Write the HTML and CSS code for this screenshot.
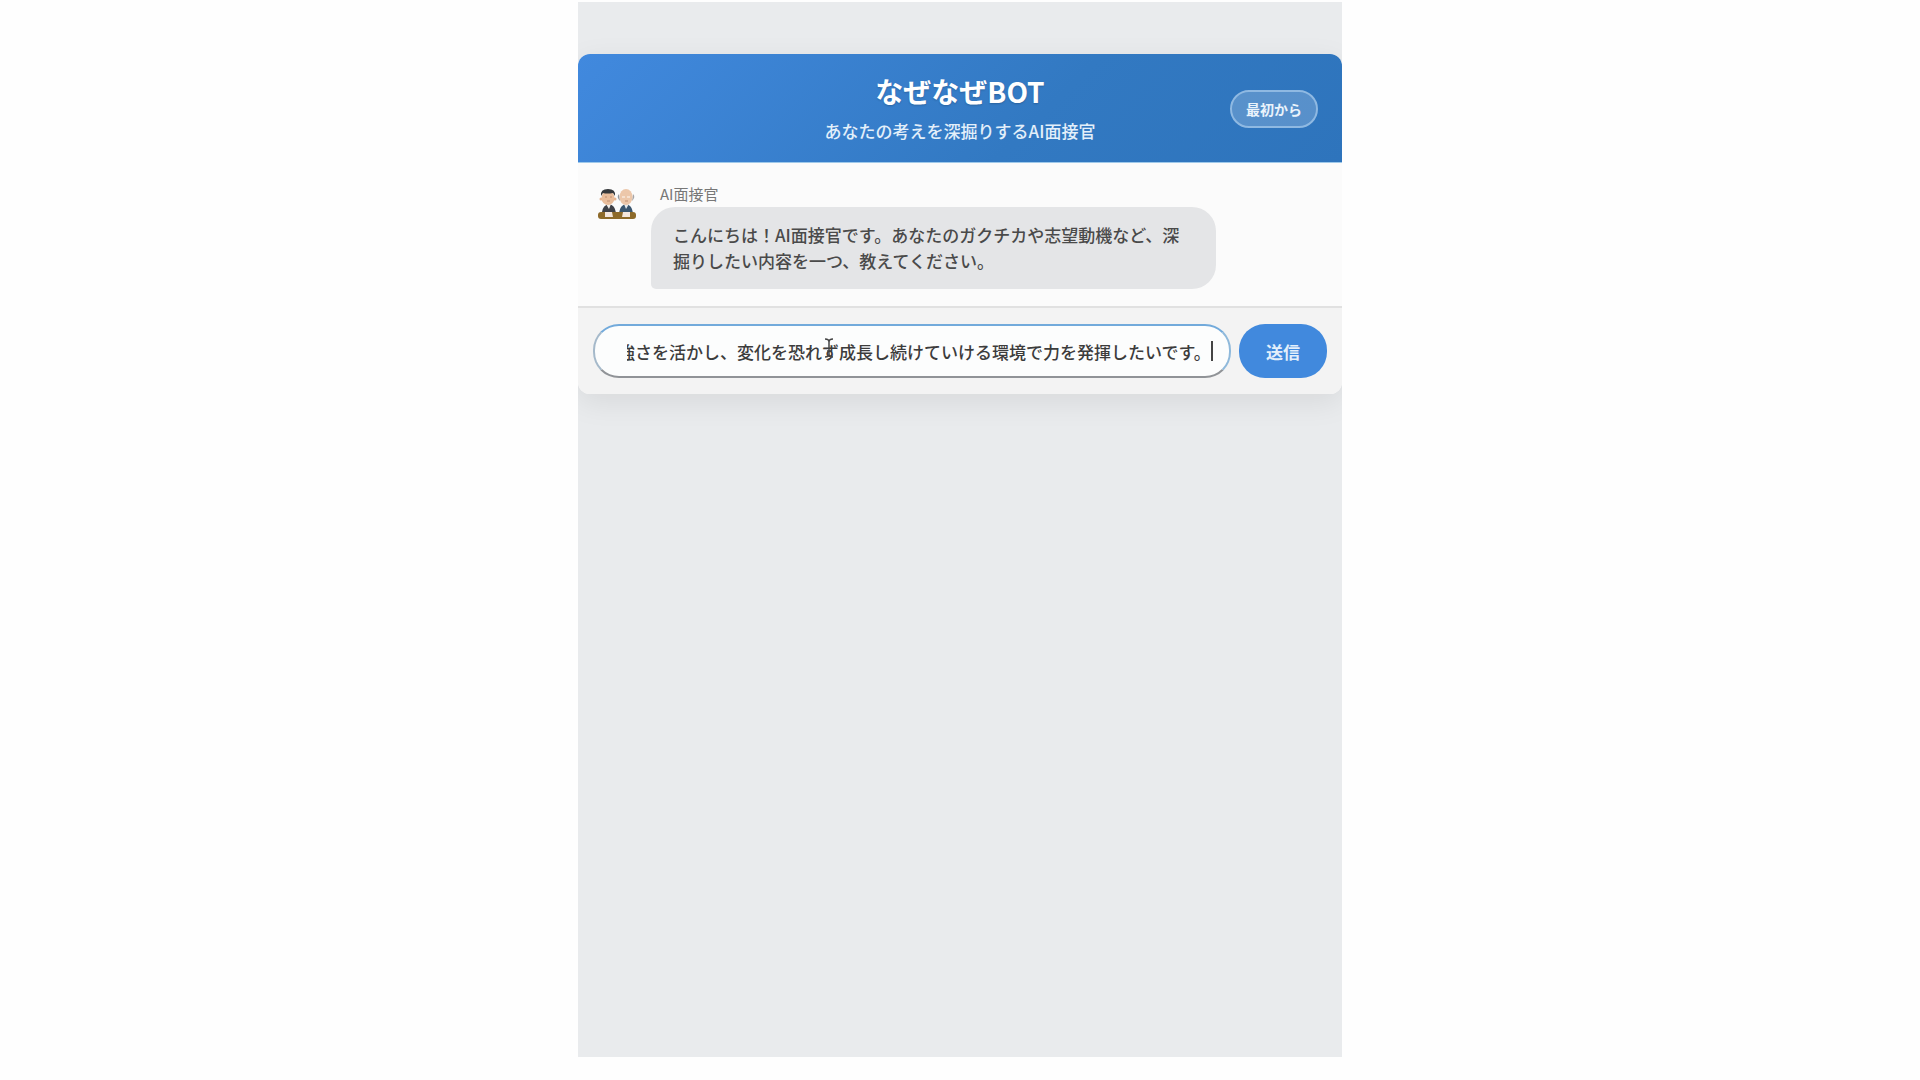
FILE: index.html
```
<!DOCTYPE html>
<html lang="ja">
<head>
    <meta charset="UTF-8">
    <meta name="viewport" content="width=device-width, initial-scale=1.0">
    <title>なぜなぜBOT</title>
    <link rel="stylesheet" href="styles.css">
</head>
<body>
    <div class="page">
        <main class="chat-container">
            <!-- ヘッダー -->
            <header class="chat-header">
                <div class="header-text">
                    <h1>なぜなぜBOT</h1>
                    <p>あなたの考えを深掘りするAI面接官</p>
                </div>
                <button type="button" class="reset-button">最初から</button>
            </header>

            <!-- メッセージ一覧 -->
            <div class="chat-messages">
                <div class="message">
                    <svg class="avatar" viewBox="0 0 38 32" aria-hidden="true">
                        <path d="M4 24 Q5 17 11 16 Q17 17 18 25 Z" fill="#3f4147"/>
                        <path d="M21 25 Q22 17 28 16 Q34 17 35 25 Z" fill="#3b566f"/>
                        <path d="M8 16 L11 21 L13 16 Z" fill="#f2eeea"/>
                        <path d="M26 16 L28 21 L31 16 Z" fill="#e6e9ec"/>
                        <circle cx="3" cy="11" r="1.5" fill="#e5b491"/>
                        <circle cx="17" cy="11" r="1.5" fill="#e5b491"/>
                        <ellipse cx="10" cy="10" rx="6.5" ry="7" fill="#e9bd9b"/>
                        <path d="M3 8 Q2 1 10 1 Q18 1 17 8 L15 5 Q9 6 5 5 Z" fill="#35383b"/>
                        <path d="M21 6 Q18 9 22 13 Z" fill="#8d949c"/>
                        <path d="M35 6 Q38 9 34 13 Z" fill="#a5a5a8"/>
                        <ellipse cx="28" cy="9" rx="6.5" ry="8" fill="#ecc7aa"/>
                        <path d="M7 9h2M12 9h2M9 13h3M27 13h3" stroke="#c08f72" stroke-width="1"/>
                        <path d="M24 9h3M29 9h3" stroke="#f7e9dc" stroke-width="1.5"/>
                        <rect x="0" y="24" width="38" height="7" rx="3" fill="#8d6a2a"/>
                        <path d="M7 24h7l1 5H7zM25 24h7v5h-8z" fill="#f3e6dc"/>
                    </svg>
                    <div class="message-body">
                        <span class="sender">AI面接官</span>
                        <p class="bubble">こんにちは！AI面接官です。あなたのガクチカや志望動機など、深掘りしたい内容を一つ、教えてください。</p>
                    </div>
                </div>
            </div>

            <!-- 入力欄 -->
            <form class="chat-form">
                <div class="input-wrap">
                    <input type="text" id="userInput" class="chat-input" aria-label="メッセージ" autocomplete="off" spellcheck="false" value="強さを活かし、変化を恐れず成長し続けていける環境で力を発揮したいです。">
                    <span class="caret"></span>
                    <svg class="text-cursor" viewBox="0 0 12 20" aria-hidden="true">
                        <path d="M2 1 Q6 1 6 4 Q6 1 10 1 M6 4 V16 M2 19 Q6 19 6 16 Q6 19 10 19 M4 13h4"/>
                    </svg>
                </div>
                <button type="submit" class="send-button">送信</button>
            </form>
        </main>
    </div>

    <script>
        // 入力欄の末尾にカーソルを置く
        const userInput = document.getElementById('userInput');
        userInput.focus();
        userInput.setSelectionRange(userInput.value.length, userInput.value.length);
        userInput.scrollLeft = userInput.scrollWidth;

        document.querySelector('.chat-form').addEventListener('submit', (e) => {
            e.preventDefault();
        });
    </script>
</body>
</html>
```
FILE: styles.css
```
* {
    box-sizing: border-box;
}

body {
    margin: 0;
    padding: 2px 0 23px;
    min-height: 100vh;
    display: flex;
    justify-content: center;
    background: #fefefe;
    color: #4a4a4a;
    font-family: "Noto Sans CJK JP", sans-serif;
    font-size: 17px;
    font-weight: 500;
    line-height: 26px;
}

h1,
p {
    margin: 0;
}

button,
input {
    font-family: inherit;
}

.page {
    width: 100%;
    max-width: 764px;
    padding-top: 52px;
    background: #e9ebed;
    overflow: hidden;
}

.chat-container {
    border-radius: 12px;
    background: #fbfbfb;
    box-shadow: 0 8px 30px rgba(0, 0, 0, 0.08);
    overflow: hidden;
}

/* ヘッダー */
.chat-header {
    display: grid;
    grid-template-columns: 1fr auto 1fr;
    align-items: center;
    padding: 19px 24px 18px;
    background: linear-gradient(135deg, #4189de, #3279c2 60%, #2e74bc);
    border-bottom: 1px solid #9fc9ea;
    color: #fff;
}

.header-text {
    grid-column: 2;
    text-align: center;
}

.header-text h1 {
    margin-bottom: 9px;
    font-size: 28px;
    font-weight: 700;
    line-height: 36px;
    text-shadow: 0 1px 2px rgba(0, 0, 0, 0.2);
}

.header-text p {
    color: #e3effa;
}

.reset-button {
    justify-self: end;
    padding: 5px 14px;
    border: 2px solid #8fb9e2;
    border-radius: 20px;
    background: rgba(255, 255, 255, 0.2);
    color: #eaf3fb;
    font-size: 14px;
    font-weight: 700;
    line-height: 24px;
    cursor: pointer;
}

/* メッセージ */
.chat-messages {
    padding: 18px 20px 17px;
}

.message {
    display: flex;
    align-items: flex-start;
    gap: 15px;
}

.avatar {
    flex: none;
    width: 38px;
    height: 32px;
    margin-top: 7px;
}

.sender {
    display: block;
    padding-left: 9px;
    color: #777;
    font-size: 15px;
    font-weight: 400;
}

.bubble {
    max-width: 565px;
    padding: 15px 22px;
    border-radius: 24px 24px 24px 5px;
    background: #e4e5e7;
}

/* 入力欄 */
.chat-form {
    display: flex;
    gap: 8px;
    padding: 16px 15px;
    border-top: 2px solid #e1e1e1;
    background: #f3f3f3;
}

.input-wrap {
    position: relative;
    flex: 1;
}

.chat-input {
    display: block;
    width: 100%;
    height: 54px;
    padding: 0 18px 0 32px;
    border: 2px solid;
    border-color: #72aadb #8fb9db #909397 #a5b9ca;
    border-radius: 26px;
    outline: none;
    background: #fcfdfd;
    color: #3c3c3c;
    font-size: 17px;
    font-weight: 500;
    caret-color: transparent;
}

/* 入力カーソル */
.caret {
    position: absolute;
    top: 17px;
    right: 18px;
    width: 2px;
    height: 20px;
    background: #444;
}

.text-cursor {
    position: absolute;
    top: 14px;
    left: 36%;
    width: 12px;
    height: 20px;
    fill: none;
    stroke: #444;
    stroke-width: 1.5;
    pointer-events: none;
}

.send-button {
    width: 88px;
    border: none;
    border-radius: 26px;
    background: #4189dd;
    color: #e3effb;
    font-size: 17px;
    font-weight: 700;
    cursor: pointer;
}
```
